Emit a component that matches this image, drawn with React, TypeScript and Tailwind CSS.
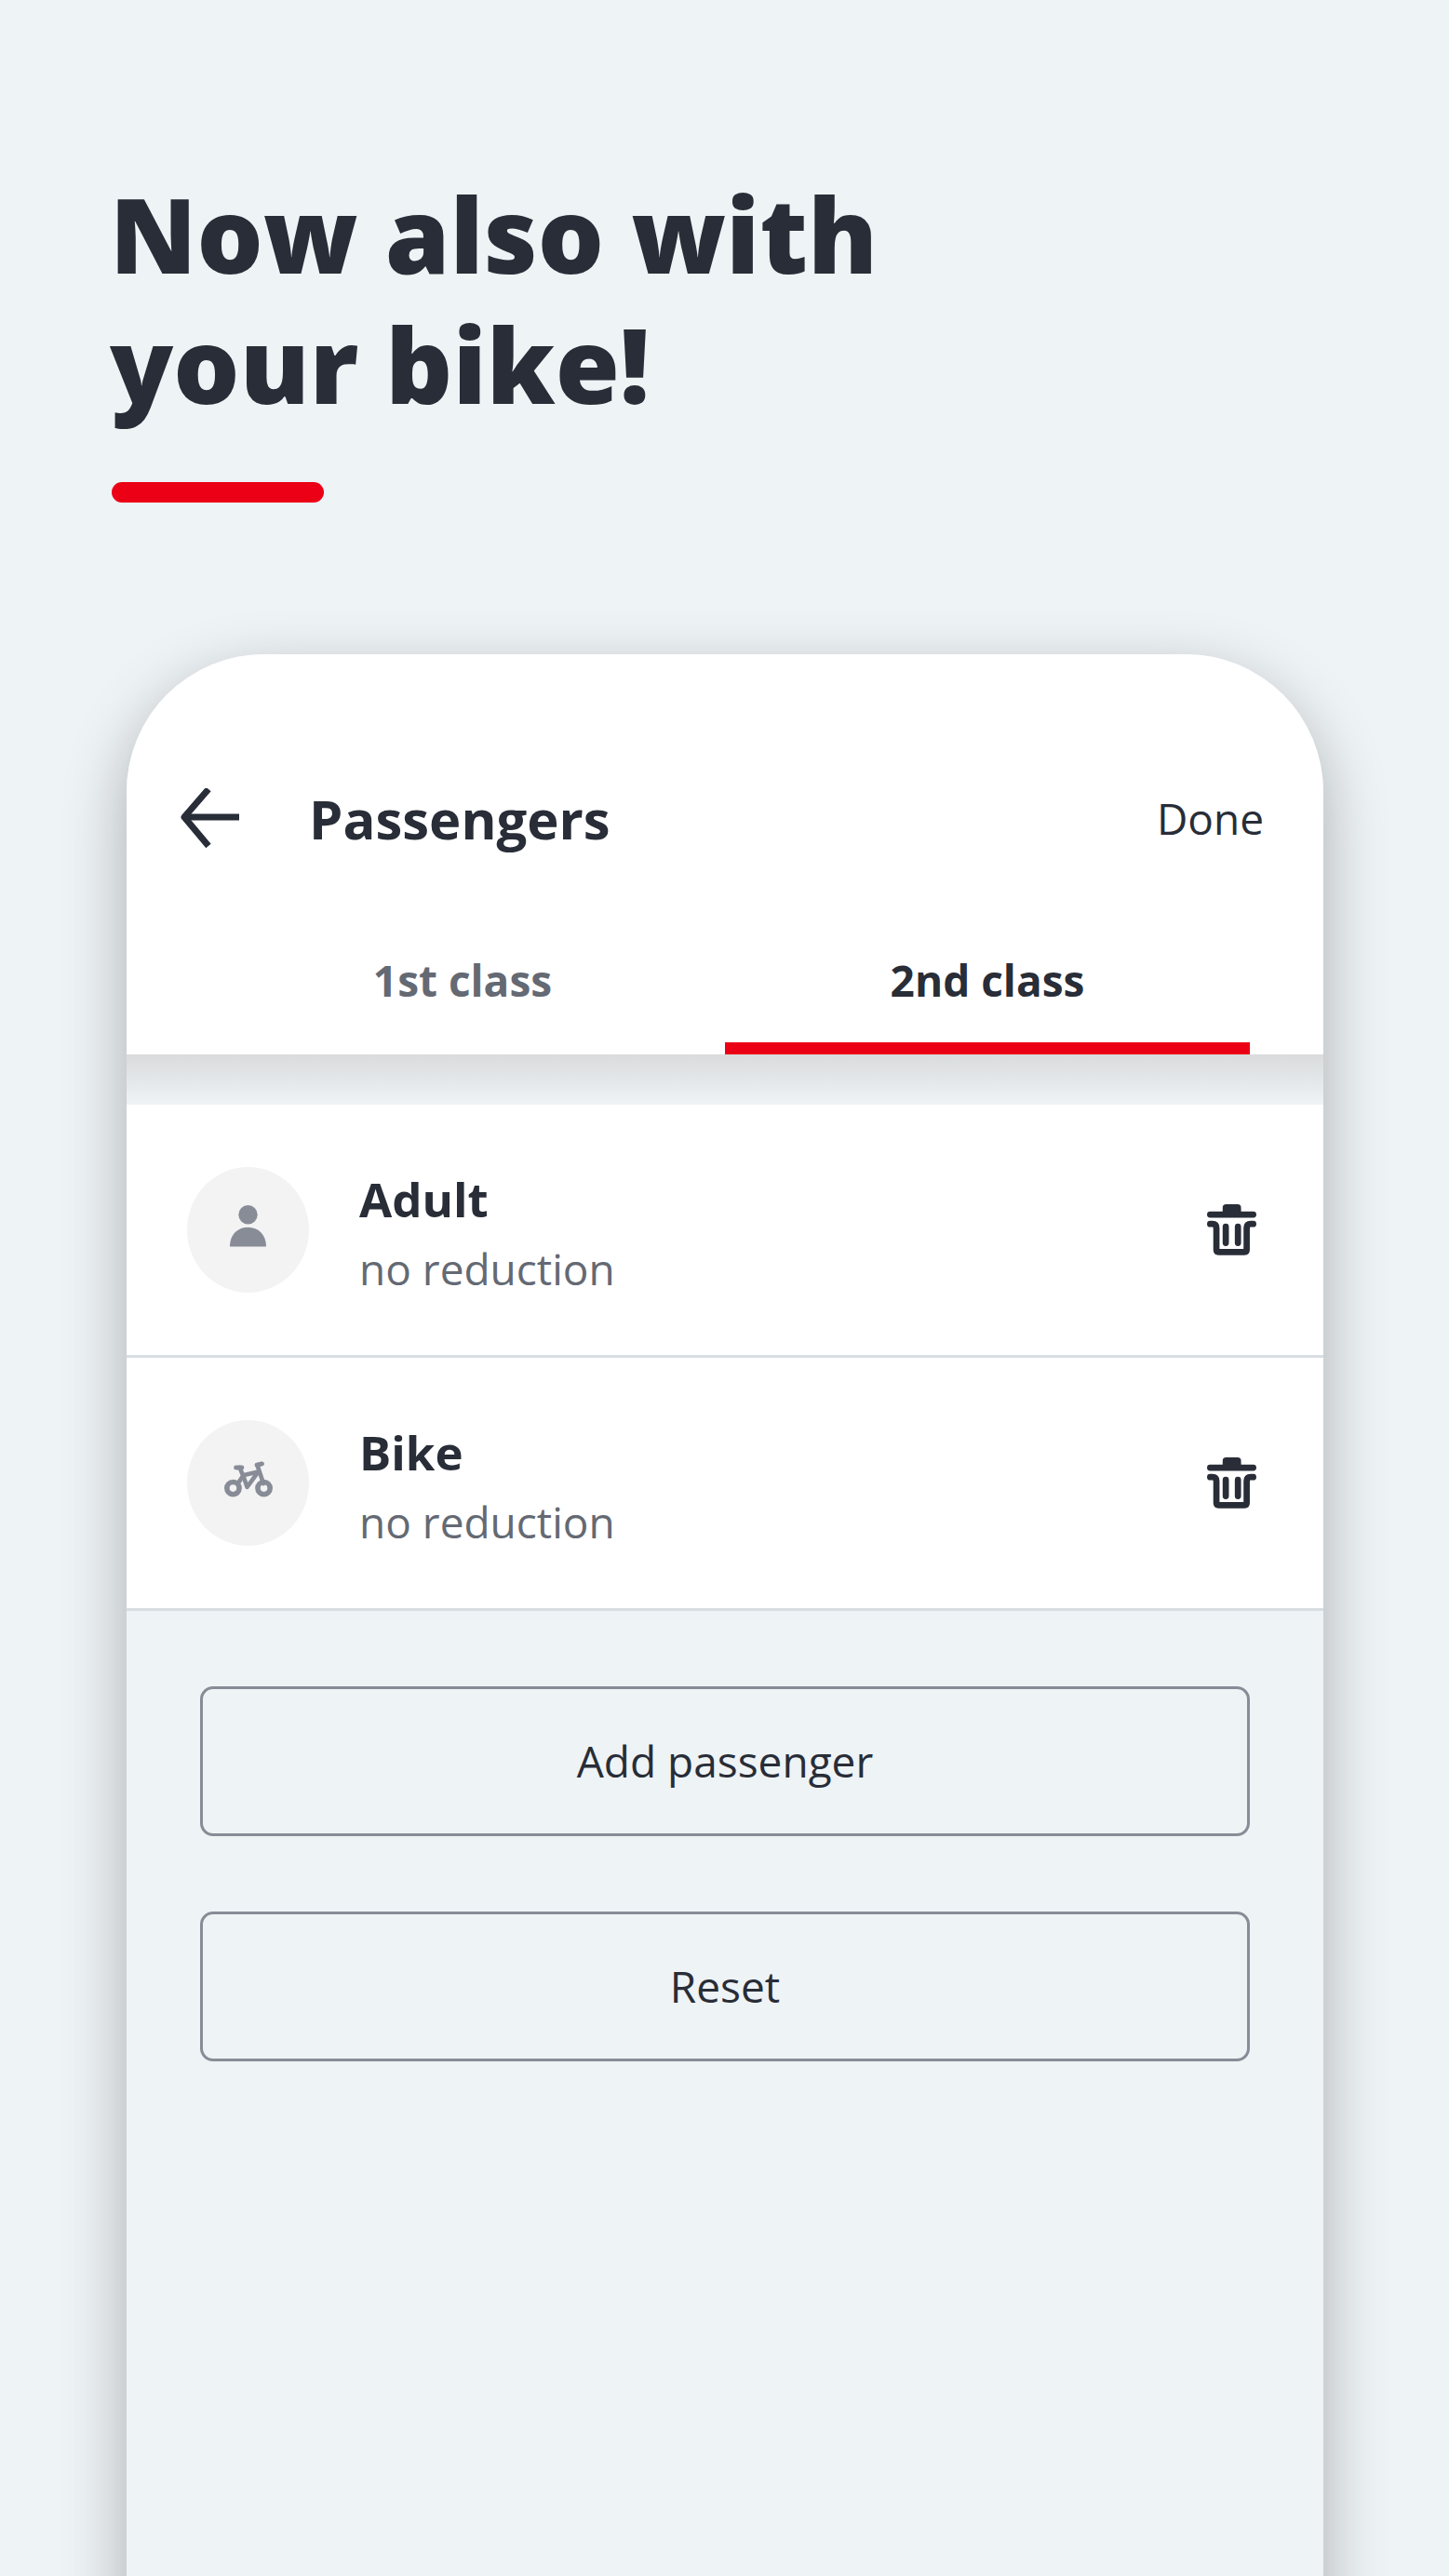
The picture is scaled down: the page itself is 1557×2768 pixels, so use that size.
import React, { useState } from "react";

type Kind = "Adult" | "Bike";

function BackIcon() {
  return (
    <svg viewBox="0 0 64 64" className="h-16 w-16" fill="none" stroke="currentColor" strokeWidth="7" aria-hidden="true">
      <path d="M63 31H5" />
      <path d="M30 1 4 31l26 31" strokeLinejoin="round" />
    </svg>
  );
}

function TrashIcon() {
  return (
    <svg viewBox="0 0 158 164" className="h-[55px] w-[53px]" fill="none" stroke="currentColor" strokeWidth="20" strokeLinecap="round" strokeLinejoin="round" aria-hidden="true">
      <path d="M50 32V11Q50 0 61 0H98Q109 0 109 11V32Z" fill="currentColor" stroke="none" />
      <path d="M10 33H148" />
      <path d="M10 63H17Q30 63 30 76V146Q30 153 37 153H120Q127 153 127 146V76Q127 63 140 63H148" />
      <path d="M60 72V124M99 72V124" />
    </svg>
  );
}

function PersonIcon() {
  return (
    <svg viewBox="0 0 39 45" className="h-[45px] w-[39px]" fill="currentColor" aria-hidden="true">
      <circle cx="19.5" cy="10.2" r="10.2" />
      <path d="M0 44.5C0 32 8 23.7 19.5 23.7S39 32 39 44.5Z" />
    </svg>
  );
}

function BikeIcon() {
  return (
    <svg viewBox="0 0 157 116" className="h-[39px] w-[52px]" fill="none" stroke="currentColor" strokeWidth="14" strokeLinecap="round" strokeLinejoin="round" aria-hidden="true">
      <circle cx="28.5" cy="87" r="20" strokeWidth="17" />
      <circle cx="128.5" cy="87" r="20" strokeWidth="17" />
      <path d="M38 20H57" strokeWidth="15" />
      <path d="M50 20 61 47 44 72" />
      <path d="M61 45 110 34 74 83Z" />
      <path d="M127 72 107 12" />
      <path d="M106 12 122 8" strokeWidth="15" />
    </svg>
  );
}

function PassengerRow({ kind, onRemove }: { kind: Kind; onRemove: () => void }) {
  return (
    <li className="flex items-center border-b-3 border-[#d8dee1] bg-white py-[67px] pr-[72px] pl-[65px]">
      <span className="flex h-[135px] w-[131px] items-center justify-center rounded-[50%] bg-[#f3f3f4] pb-2 text-[#878c96]">
        {kind === "Adult" ? <PersonIcon /> : <BikeIcon />}
      </span>
      <div className="-my-3 ml-[54px] flex-1 pt-1.5">
        <h2 className="text-[51px] leading-[76px] font-bold">{kind}</h2>
        <p className="text-[46px] leading-[74px] text-[#646973]">no reduction</p>
      </div>
      <button type="button" aria-label={`Remove ${kind}`} onClick={onRemove}>
        <TrashIcon />
      </button>
    </li>
  );
}

const tabs = ["1st class", "2nd class"];
const initial: Kind[] = ["Adult", "Bike"];

export default function App() {
  const [active, setActive] = useState("2nd class");
  const [passengers, setPassengers] = useState<Kind[]>(initial);
  const actionClass = "rounded-[14px] border-3 border-[#878c96] py-11 text-[46px] leading-[67px]";

  return (
    <main className="flex min-h-screen flex-col overflow-hidden bg-[#eef3f6] font-['Open_Sans','Noto_Sans',sans-serif] text-[#282d37]">
      <header className="px-[118px] pt-[181px]">
        <h1 className="text-[112px] leading-[140px] font-extrabold">
          Now also with
          <br />
          your bike!
        </h1>
        <div className="mt-[57px] ml-0.5 h-[22px] w-[228px] rounded-full bg-[#ec0016]" />
      </header>

      <section className="mr-[135px] ml-[136px] mt-[163px] -mb-32 flex flex-1 flex-col rounded-t-[148px] bg-[#eef3f6] shadow-[0_24px_68px_rgba(0,0,0,0.29)]">
        <div className="rounded-t-[148px] bg-white pt-28">
          <div className="flex h-32 items-center pr-16 pl-[58px]">
            <button type="button" aria-label="Back">
              <BackIcon />
            </button>
            <h2 className="ml-[74px] flex-1 text-[58px] font-bold">Passengers</h2>
            <button type="button" className="text-[46px]">Done</button>
          </div>
          <div role="tablist" className="mt-11 grid grid-cols-2 px-[79px]">
            {tabs.map((tab) => (
              <button
                key={tab}
                type="button"
                role="tab"
                aria-selected={active === tab}
                onClick={() => setActive(tab)}
                className={`h-[146px] border-b-13 text-[46px] font-bold ${active === tab ? "border-[#ec0016]" : "border-transparent text-[#646973]"}`}
              >
                {tab}
              </button>
            ))}
          </div>
        </div>
        <div className="h-[54px] bg-linear-to-b from-[#d9dbdc] to-[#eff3f6]" />
        <ul>
          {passengers.map((kind, i) => (
            <PassengerRow key={i} kind={kind} onRemove={() => setPassengers(passengers.filter((_, j) => j !== i))} />
          ))}
        </ul>
        <div className="flex flex-col gap-[81px] px-[79px] pt-[81px] pb-32">
          <button type="button" className={actionClass} onClick={() => setPassengers([...passengers, "Adult"])}>
            Add passenger
          </button>
          <button type="button" className={actionClass} onClick={() => setPassengers(initial)}>
            Reset
          </button>
        </div>
      </section>
    </main>
  );
}
